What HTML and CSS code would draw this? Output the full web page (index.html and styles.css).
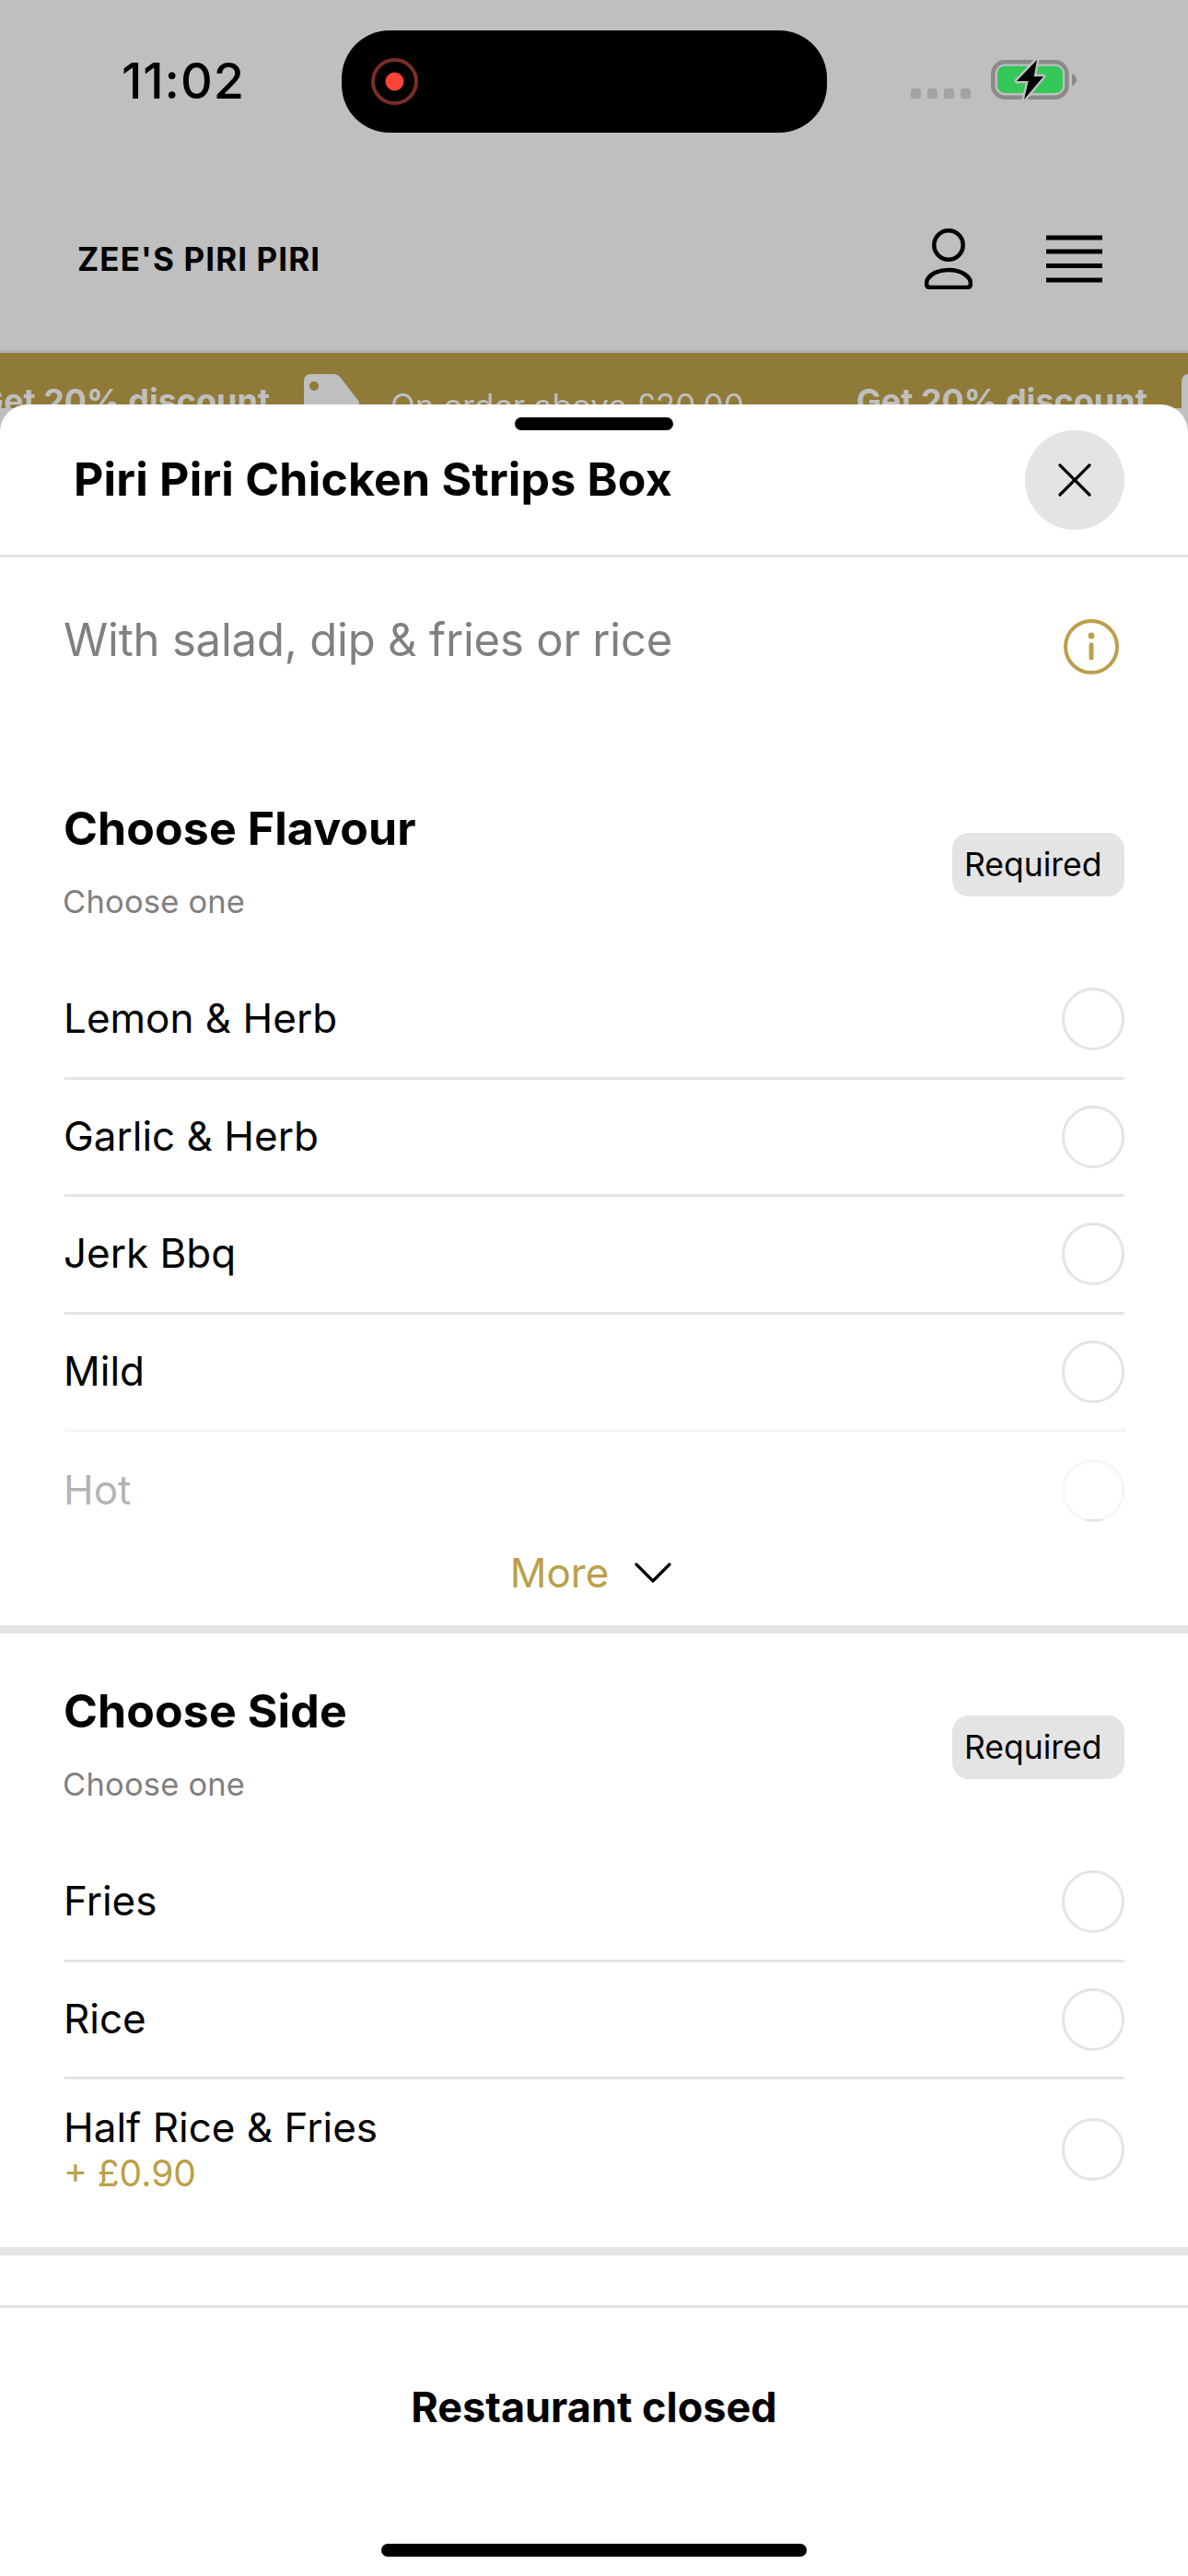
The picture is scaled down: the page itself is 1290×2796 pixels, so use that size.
FILE: index.html
```html
<!DOCTYPE html>
<html lang="en">
<head>
<meta charset="utf-8">
<title>Zee's Piri Piri</title>
<link rel="stylesheet" href="styles.css">
</head>
<body>
<div class="page">
  <div class="status">
    <span class="time">11:02</span>
    <div class="island">
      <svg class="rec" width="51" height="51" viewBox="0 0 51 51"><circle cx="25.500" cy="25.500" r="23.500" fill="none" stroke="#7a2e28" stroke-width="4"/><circle cx="25.500" cy="25.500" r="10" fill="#ff453a"/></svg>
    </div>
    <div class="signal"><i></i><i></i><i></i><i></i></div>
    <svg class="battery" width="96" height="50" viewBox="0 0 96 50">
      <rect x="2.250" y="6.250" width="80.200" height="38.500" rx="13" fill="none" stroke="#8a8a8a" stroke-width="4.500"/>
      <rect x="7" y="10.700" width="71" height="29.300" rx="8" fill="#34c759"/>
      <path d="M88 19c3 1 5 4 5 6.500s-2 5.500-5 6.500z" fill="#8a8a8a"/>
      <path d="M50 4 28 27h12.700L36 47l21-25H46.700z" fill="#000" stroke="#bfbfbf" stroke-width="5" paint-order="stroke" stroke-linejoin="round"/>
    </svg>
  </div>

  <header class="topbar">
    <span class="brand">ZEE'S PIRI PIRI</span>
    <div class="top-icons">
      <svg width="52" height="66" viewBox="0 0 52 66"><circle cx="26" cy="18" r="15.700" fill="none" stroke="#000" stroke-width="4.500"/><path d="M26 45c14 0 24 7 24 15 0 3-2 4-4 4H6c-2 0-4-1-4-4 0-8 10-15 24-15z" fill="none" stroke="#000" stroke-width="4.500"/></svg>
      <svg width="61" height="52" viewBox="0 0 61 52"><path d="M0 3h61M0 18h61M0 33.500h61M0 49h61" stroke="#000" stroke-width="5" fill="none"/></svg>
    </div>
  </header>

  <div class="banner">
    <div class="track">
      <b>Get 20% discount</b>
      <svg class="tag" width="60" height="60" viewBox="0 0 60 60"><path d="M8 0h24c3 0 5 1 7 3l21 27v30H0V8c0-5 3-8 8-8z" fill="#bfbfbf"/><circle cx="11" cy="13" r="5" fill="#8f7a38"/></svg>
      <span>On order above £20.00</span>
      <b class="next">Get 20% discount</b>
      <svg class="tag" width="60" height="60" viewBox="0 0 60 60"><path d="M8 0h24c3 0 5 1 7 3l21 27v30H0V8c0-5 3-8 8-8z" fill="#bfbfbf"/></svg>
    </div>
  </div>

  <section class="sheet">
    <div class="sheet-head">
      <div class="handle"></div>
      <div class="head-row">
        <h1>Piri Piri Chicken Strips Box</h1>
        <button class="close" type="button" aria-label="Close">
          <svg width="36" height="36" viewBox="0 0 36 36"><path d="M2 2l32 32M34 2 2 34" stroke="#000" stroke-width="3.200" stroke-linecap="round"/></svg>
        </button>
      </div>
    </div>

    <div class="desc">
      <p>With salad, dip &amp; fries or rice</p>
      <svg width="60" height="60" viewBox="0 0 60 60"><circle cx="30" cy="30" r="28" fill="none" stroke="#bb9f49" stroke-width="4"/><circle cx="30" cy="18" r="3.500" fill="#bb9f49"/><path d="M30 28v14" stroke="#bb9f49" stroke-width="5" stroke-linecap="round"/></svg>
    </div>

    <div class="group group-collapsed">
      <div class="group-head">
        <div>
          <h2>Choose Flavour</h2>
          <p class="hint">Choose one</p>
        </div>
        <span class="badge">Required</span>
      </div>
      <div class="option"><span>Lemon &amp; Herb</span><i class="radio"></i></div>
      <div class="option"><span>Garlic &amp; Herb</span><i class="radio"></i></div>
      <div class="option"><span>Jerk Bbq</span><i class="radio"></i></div>
      <div class="option"><span>Mild</span><i class="radio"></i></div>
      <div class="option last"><span>Hot</span><i class="radio"></i></div>
      <div class="fade"></div>
      <div class="more"><span>More</span>
        <svg width="40" height="24" viewBox="0 0 40 24"><path d="M2 3l18 18L38 3" fill="none" stroke="#000" stroke-width="3.200" stroke-linecap="round" stroke-linejoin="round"/></svg>
      </div>
    </div>

    <div class="group">
      <div class="group-head">
        <div>
          <h2>Choose Side</h2>
          <p class="hint">Choose one</p>
        </div>
        <span class="badge">Required</span>
      </div>
      <div class="option"><span>Fries</span><i class="radio"></i></div>
      <div class="option"><span>Rice</span><i class="radio"></i></div>
      <div class="option last tall">
        <div class="stack"><span>Half Rice &amp; Fries</span><span class="price">+ £0.90</span></div>
        <i class="radio"></i>
      </div>
    </div>

    <div class="spacer"></div>

    <footer class="sheet-foot">Restaurant closed</footer>
    <div class="home"></div>
  </section>
</div>
</body>
</html>
```

FILE: styles.css
```css
* { box-sizing: border-box; }
html, body { margin: 0; padding: 0; }
body { font-family: Inter, "Liberation Sans", sans-serif; background: #bfbfbf; color: #000; }
h1, h2, p { margin: 0; }

.page { position: relative; width: 1290px; height: 2796px; overflow: hidden; background: #bfbfbf; }

/* status bar */
.status { height: 176px; display: flex; align-items: flex-start; }
.time { margin: 56px 0 0 132px; width: 239px; font-size: 54px; line-height: 64px; font-weight: 500; letter-spacing: .9px; }
.island { margin-top: 33px; width: 527px; height: 111px; border-radius: 52px; background: #000; display: flex; align-items: center; padding-left: 32px; }
.signal { margin: 96px 0 0 91px; display: flex; gap: 7px; }
.signal i { display: block; width: 11px; height: 11px; border-radius: 3px; background: #a3a3a3; }
.battery { margin: 61px 0 0 22px; }

/* top bar */
.topbar { height: 207px; border-bottom: 3px solid #b0b0b0; display: flex; justify-content: space-between; align-items: center; padding: 0 93px 0 84px; }
.brand { font-size: 35px; font-weight: 700; letter-spacing: 1.1px; margin-top: 6px; }
.top-icons { display: flex; align-items: center; gap: 80px; margin-top: 5px; }

/* promo banner */
.banner { height: 60px; background: #8f7a38; overflow: hidden; color: #bfbfbf; }
.track { display: flex; align-items: flex-start; margin-left: -23px; white-space: nowrap; line-height: 44px; padding-top: 23px; }
.track b { font-size: 36px; font-weight: 700; margin-top: 7px; }
.track span { font-size: 35px; margin-top: 12px; }
.tag { margin: 0 34px 0 37px; flex: none; }
.track .next { margin-left: 122px; }

/* bottom sheet */
.sheet { position: absolute; left: 0; right: 0; top: 439px; bottom: 0; background: #fff; border-radius: 30px 30px 0 0; overflow: hidden; display: flex; flex-direction: column; }
.sheet-head { flex: none; height: 166px; border-bottom: 3px solid #e4e4e4; padding-top: 14px; }
.handle { width: 172px; height: 14px; border-radius: 7px; background: #000; margin: 0 auto; }
.head-row { display: flex; justify-content: space-between; align-items: center; padding: 0 69px 0 80px; }
h1 { font-size: 50px; font-weight: 700; line-height: 60px; letter-spacing: .2px; margin-bottom: 2px; }
.close { width: 108px; height: 108px; border: 0; padding: 0; border-radius: 50%; background: #e4e4e4; display: flex; align-items: center; justify-content: center; }

.desc { flex: none; height: 210px; display: flex; justify-content: space-between; align-items: flex-start; padding: 64px 75px 0 69px; }
.desc p { font-size: 49px; line-height: 52px; color: #808080; letter-spacing: -.2px; }
.desc svg { margin-top: 3px; }

.group { flex: none; position: relative; padding: 0 69px 0 70px; border-bottom: 9px solid #e4e4e4; }
.group-head { height: 229px; display: flex; justify-content: space-between; align-items: flex-start; padding-top: 54px; }
h2 { font-size: 50px; line-height: 60px; font-weight: 700; letter-spacing: .1px; margin-left: -1px; }
.hint { margin: 29px 0 0 -2px; font-size: 34.500px; line-height: 42px; color: #808080; letter-spacing: .2px; }
.badge { margin-top: 35px; width: 187px; height: 69px; border-radius: 18px; background: #e4e4e4; font-size: 35.500px; line-height: 69px; padding-left: 13px; }

.option { height: 127.500px; display: flex; justify-content: space-between; align-items: center; border-bottom: 3px solid #e4e4e4; font-size: 44px; }
.option > span { margin: 0 0 2px -1px; }
.option.last { border-bottom: 0; }
.radio { display: block; width: 68px; height: 68px; border-radius: 50%; border: 3px solid #e4e4e4; }
.tall { height: 182px; align-items: flex-start; padding-top: 26px; }
.tall .radio { margin-top: 16px; }
.stack { display: flex; flex-direction: column; margin-left: -1px; }
.stack span { line-height: 52px; }
.stack .price { font-size: 39px; line-height: 46px; color: #bb9f49; margin-top: 1px; }

.group-collapsed .last { height: 127px; }
.fade { position: absolute; left: 70px; right: 70px; top: 715px; height: 119px; background: linear-gradient(to bottom, rgba(255,255,255,.65), rgba(255,255,255,.72)); }
.more { height: 83px; display: flex; align-items: flex-start; justify-content: center; gap: 28px; color: #bb9f49; font-size: 44px; line-height: 52px; padding-right: 8px; }
.more svg { margin-top: 14px; }

.spacer { flex: none; height: 54px; }
.sheet-foot { flex: 1; border-top: 3px solid #e4e4e4; text-align: center; font-size: 45px; font-weight: 700; line-height: 54px; padding-top: 81px; }
.home { position: absolute; left: 414px; width: 462px; bottom: 21px; height: 14px; border-radius: 7px; background: #000; }
```
